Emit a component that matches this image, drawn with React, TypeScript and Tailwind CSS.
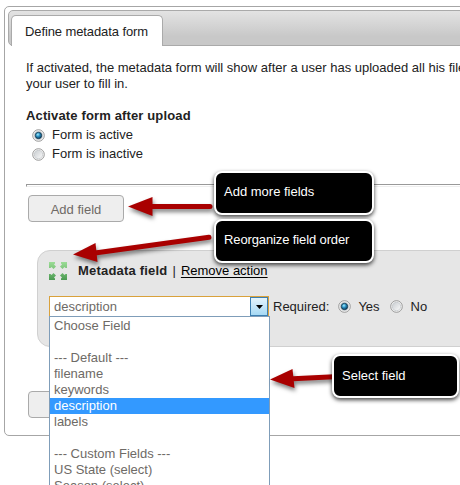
import React from "react";

const options = [
  "Choose Field",
  "",
  "--- Default ---",
  "filename",
  "keywords",
  "description",
  "labels",
  "",
  "--- Custom Fields ---",
  "US State (select)",
  "Season (select)",
];

function Radio({ checked = false }: { checked?: boolean }) {
  return (
    <svg width="13" height="13" viewBox="0 0 13 13" className="block shrink-0">
      <defs>
        <radialGradient id="radioDot" cx="40%" cy="35%" r="65%">
          <stop offset="0" stopColor="#a5eeff" />
          <stop offset="0.45" stopColor="#2f95c6" />
          <stop offset="1" stopColor="#0a3d62" />
        </radialGradient>
        <linearGradient id="radioFace" x1="0" y1="0" x2="1" y2="1">
          <stop offset="0" stopColor="#c9cdd1" />
          <stop offset="1" stopColor="#fafafa" />
        </linearGradient>
      </defs>
      <circle cx="6.5" cy="6.5" r="5.8" fill="#f6f6f6" stroke="#8e8f8f" strokeWidth="0.9" />
      <circle cx="6.5" cy="6.5" r="4.2" fill="url(#radioFace)" stroke="#b9bdc1" strokeWidth="0.6" />
      {checked && <circle cx="6.5" cy="6.5" r="3.2" fill="url(#radioDot)" stroke="#12384f" strokeWidth="0.8" />}
    </svg>
  );
}

function MoveIcon() {
  return (
    <svg width="18" height="18" viewBox="0 0 18 18" className="block">
      <defs>
        <linearGradient id="moveGreen" x1="0" y1="0" x2="0" y2="18" gradientUnits="userSpaceOnUse">
          <stop offset="0" stopColor="#9bdc96" />
          <stop offset="0.4" stopColor="#7cc47a" />
          <stop offset="1" stopColor="#4b9a52" />
        </linearGradient>
      </defs>
      <g fill="url(#moveGreen)">
        <path d="M0 0H6V1.500L5 2.500L7 4.500L4.500 7L2.500 5L1.500 6H0Z" />
        <path d="M18 0H12V1.500L13 2.500L11 4.500L13.500 7L15.500 5L16.500 6H18Z" />
        <path d="M0 18H6V16.500L5 15.500L7 13.500L4.500 11L2.500 13L1.500 12H0Z" />
        <path d="M18 18H12V16.500L13 15.500L11 13.500L13.500 11L15.500 13L16.500 12H18Z" />
      </g>
    </svg>
  );
}

function Callout({ place, children }: { place: string; children: React.ReactNode }) {
  return (
    <div
      className={
        "absolute h-11 rounded-[8px] border-2 border-white bg-black pl-[8px] pt-[11px] leading-4 text-white shadow-[0_2px_4px_0_rgba(0,0,0,0.75)] " +
        place
      }
    >
      {children}
    </div>
  );
}

export default function App() {
  return (
    <div className="relative h-[485px] w-[460px] overflow-hidden bg-white pl-1 pt-1.5 font-['Liberation_Sans',Arial,sans-serif] text-[13px] leading-4 text-[#222]">
      <div className="h-[430px] w-[480px] rounded-[5px] border border-[#a6a6a6] pl-[3px] pt-[3px]">
        <div className="flex h-9 items-end rounded-l-[5px] border border-[#aaa] bg-linear-to-b from-[#e3e3e3] to-[#c8c8c8] to-75% pl-[2px]">
          <div className="-mb-px h-[31px] w-[152px] rounded-t-[5px] border border-b-0 border-[#aaa] bg-white pl-[13px] pt-[8px] tracking-[-0.1px]">
            Define metadata form
          </div>
        </div>

        <div className="pl-[18px]">
          <p className="mt-[14px] whitespace-nowrap">
            If activated, the metadata form will show after a user has uploaded all his files,
            <br />
            your user to fill in.
          </p>
          <h2 className="mt-4 font-bold tracking-[0.14px]">Activate form after upload</h2>
          <div className="mt-[3px] flex items-center gap-[7px] pl-[6px]">
            <Radio checked />
            <span>Form is active</span>
          </div>
          <div className="mt-[3px] flex items-center gap-[7px] pl-[6px]">
            <Radio />
            <span>Form is inactive</span>
          </div>
          <div className="mt-[22px] h-[3px] border border-b-[#eee] border-l-[#999] border-r-0 border-t-[#999]" />
          <div className="ml-[2px] mt-[8px] flex h-[27px] w-24 items-center justify-center rounded-[4px] border border-[#aaa] bg-[#eee] pt-[2px] text-[#6e6a66]">
            Add field
          </div>

          <div className="ml-[11px] mt-[28px] h-[97px] rounded-l-[13px] border border-[#d0d0d0] bg-[#e6e6e6] pl-[11px] pt-[11px]">
            <div className="flex h-[18px] items-center gap-[11px]">
              <MoveIcon />
              <div className="whitespace-nowrap">
                <b className="tracking-[0.2px]">Metadata field</b>
                <span className="mx-[5px]">|</span>
                <span className="text-black underline underline-offset-2">Remove action</span>
              </div>
            </div>
            <div className="mt-[16px] flex items-center">
              <div className="relative flex h-[21px] w-[220px] items-center justify-between border border-[#d9a13b] bg-white pl-[4px] text-[#6e6a66]">
                <span>description</span>
                <span className="flex h-[19px] w-[18px] items-center justify-center border border-[#3c7fb1] bg-linear-to-b from-[#e5f4fc] to-[#a5d9f4]">
                  <svg width="7" height="4" viewBox="0 0 7 4">
                    <path d="M0 0H7L3.5 4Z" fill="#000" />
                  </svg>
                </span>
                <div className="absolute -left-px top-[19px] z-10 h-[180px] w-[221px] border border-[#7f9db9] bg-white pt-[1px]">
                  {options.map((label, i) => (
                    <div
                      key={i}
                      className={
                        "h-4 whitespace-nowrap pl-[4px] leading-4 " +
                        (label === "description" ? "bg-[#3399ff] text-white" : "")
                      }
                    >
                      {label}
                    </div>
                  ))}
                </div>
              </div>
              <span className="ml-[4px]">Required:</span>
              <span className="ml-[9px]"><Radio checked /></span>
              <span className="ml-[7px]">Yes</span>
              <span className="ml-[10px]"><Radio /></span>
              <span className="ml-[8px]">No</span>
            </div>
          </div>

          <div className="ml-[2px] mt-[44px] h-[27px] w-24 rounded-[4px] border border-[#aaa] bg-[#eee]" />
        </div>
      </div>

      <svg width="460" height="485" viewBox="0 0 460 485" className="pointer-events-none absolute left-0 top-0 z-20">
        <g fill="#a90000" stroke="#a90000" className="drop-shadow-[1px_3px_2px_rgba(0,0,0,0.5)]">
          <path d="M128 206.500L152.500 197V216Z" stroke="none" />
          <path d="M151 206.500H210" strokeWidth="5" strokeLinecap="round" />
          <path d="M73 254.500L95.500 243L97.500 262Z" stroke="none" />
          <path d="M95 253L209 237.300" strokeWidth="5" strokeLinecap="round" />
          <path d="M270 379.500L292.500 369L294.500 388Z" stroke="none" />
          <path d="M293 378.700L334 376.700" strokeWidth="5" />
        </g>
      </svg>
      <Callout place="left-[214px] top-[171px] z-20 w-[160px]">Add more fields</Callout>
      <Callout place="left-[214px] top-[219px] z-20 w-[160px] tracking-[-0.12px]">Reorganize field order</Callout>
      <Callout place="left-[332px] top-[354px] z-20 w-[127px] pt-[12px]">Select field</Callout>
    </div>
  );
}
